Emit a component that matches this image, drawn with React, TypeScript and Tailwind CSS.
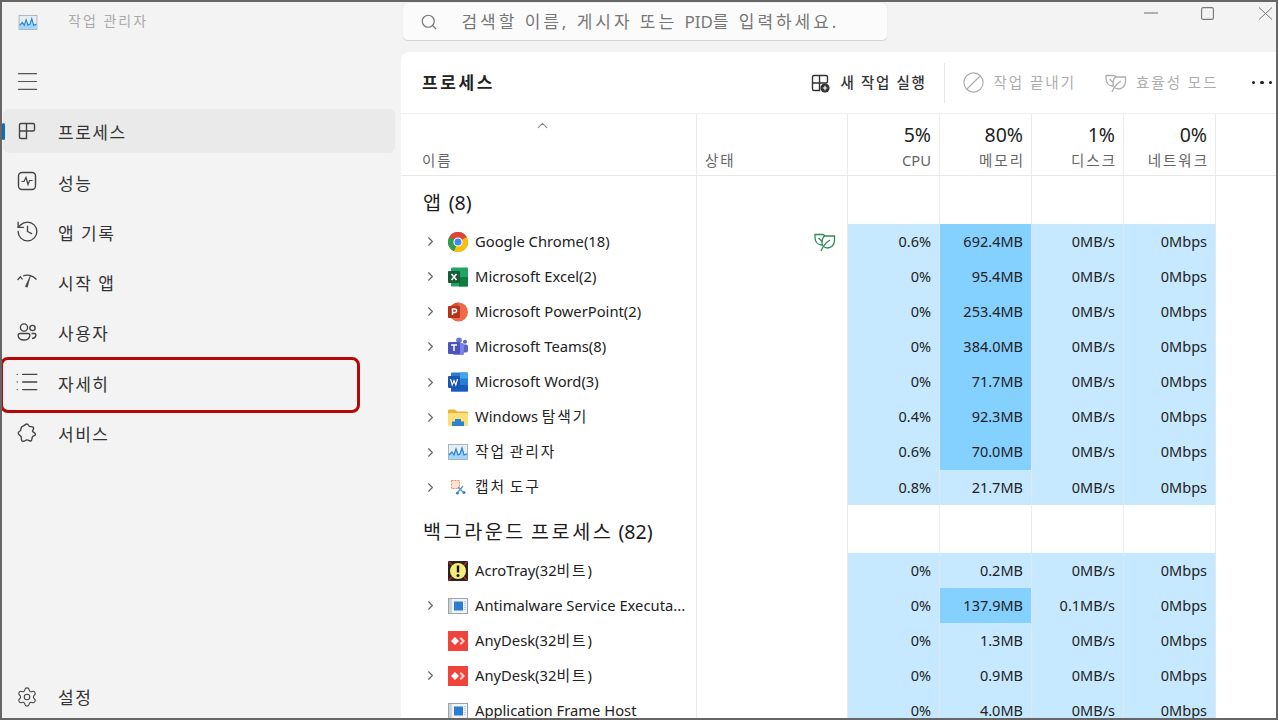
import React from "react"
import { ChevronRight, ChevronUp, History, List, Search, Settings, Ban, Menu } from "lucide-react"

const FONT = "font-['Noto_Sans','Noto_Sans_CJK_KR',sans-serif]"

// hangul runs are wider in the original font, so they get their own tracking
function K({ text }: { text: string }) {
  return (
    <>
      {text.split(/([가-힣]+)/).map((part, i) =>
        i % 2 === 1 ? (
          <span key={i} className="tracking-[0.13em]">{part}</span>
        ) : (
          <span key={i}>{part}</span>
        )
      )}
    </>
  )
}

function TaskIcon({ className = "" }: { className?: string }) {
  return (
    <svg viewBox="0 0 20 16" className={className}>
      <rect x="0.5" y="0.5" width="19" height="15" fill="#e4eef6" stroke="#a9b4bd" />
      <path d="M1 14V10L4 8L6 10L8 4L10 10L12 9L14 3L16 10L19 9V15H1Z" fill="#9fd6fa" />
      <path d="M1 11L4 8L6 11L8 5L10 11L12 10L14 4L16 11L19 10" fill="none" stroke="#2f7fd0" strokeWidth="1.2" />
    </svg>
  )
}

function ProcessIcon({ plus = false }: { plus?: boolean }) {
  return (
    <svg viewBox="0 0 20 20" className="h-5 w-5" fill="none" stroke="currentColor" strokeWidth="1.4">
      <path d="M4 2.5H9.5V10H2.5V4A1.5 1.5 0 0 1 4 2.5ZM9.5 2.5H16A1.5 1.5 0 0 1 17.5 4V8.5A1.5 1.5 0 0 1 16 10H9.5M2.5 10V16A1.5 1.5 0 0 0 4 17.5H9.5V10" />
      {plus && <circle cx="15" cy="15" r="4.6" fill="currentColor" stroke="none" />}
      {plus && <path d="M15 12.8V17.2M12.8 15H17.2" stroke="#fff" strokeWidth="1.2" />}
    </svg>
  )
}

function PerfIcon() {
  return (
    <svg viewBox="0 0 20 20" className="h-5 w-5" fill="none" stroke="currentColor" strokeWidth="1.4">
      <rect x="1.5" y="1.5" width="17" height="17" rx="3.5" />
      <path d="M4.5 10.5H7L9 6.5L11 13.5L12.5 9.5H15.5" strokeWidth="1.2" />
    </svg>
  )
}

function StartupIcon() {
  return (
    <svg viewBox="0 0 20 20" className="h-5 w-5" fill="none" stroke="currentColor" strokeWidth="1.2">
      <path d="M0.5 8L3.5 4.8L5.5 7.5" />
      <path d="M6 4C10 2.2 15.5 3 19.5 7.5" />
      <path d="M8.3 14.5L13.5 3.5L10.3 15.2Z" fill="currentColor" strokeWidth="0.6" />
    </svg>
  )
}

function UsersIcon() {
  return (
    <svg viewBox="0 0 20 20" className="h-5 w-5" fill="none" stroke="currentColor" strokeWidth="1.4">
      <circle cx="7" cy="5.5" r="3.6" />
      <circle cx="15.5" cy="6" r="2.6" />
      <path d="M3 11.5H11C12.5 11.5 13 12.5 12.8 13.8C12.3 16.6 10 18 7 18C4 18 1.6 16.6 1.2 13.8C1 12.5 1.6 11.5 3 11.5Z" />
      <path d="M14.5 11.5H17.5C18.8 11.5 19.2 12.6 18.8 13.8C18.2 15.6 16.8 16.5 15 16.5" />
    </svg>
  )
}

function ServiceIcon() {
  return (
    <svg viewBox="0 0 20 20" className="h-5 w-5" fill="none" stroke="currentColor" strokeWidth="1.4">
      <path d="M10 1C11.5 1 11.5 3.4 13 3.6C14.5 3.8 16.5 3.2 16.6 5.2C16.7 6.8 14.8 7.6 15.6 8.6C16.6 9.6 18.6 9.8 18.4 11.6C18.2 13 16 12.8 15.4 13.8C14.8 15 15.4 17.4 13.6 18C12 18.5 11.2 16.6 9.8 16.9C8.3 17.2 6.2 19.4 4.8 17.6C3.8 16.2 5 14.4 3.8 13.2C2.8 12.2 1 11.4 1.3 9.8C1.6 8.2 3.4 8.4 3.8 6.8C4.2 5.2 3.8 3.6 5.8 3.2C7.2 3 8.4 1 10 1Z" />
    </svg>
  )
}

function LeafIcon({ className = "" }: { className?: string }) {
  return (
    <svg viewBox="0 0 22 20" className={className} fill="none" stroke="currentColor" strokeWidth="1.3">
      <path d="M8 13C4 13 1 10 1 5V2.5H8C9.5 2.5 10.5 3 11 4" />
      <path d="M11 4H20.5V8C20.5 13.5 17 16 13.5 16C10 16 8 13.5 8 10.5C8 7 9.5 4 11 4Z" />
      <path d="M7 19C9 14 12 10.5 16 8M4.5 6L8 9.5" />
    </svg>
  )
}

function ChromeIcon() {
  return (
    <svg viewBox="0 0 20 20" className="h-5 w-5">
      <circle cx="10" cy="10" r="10" fill="#db4437" />
      <path d="M10 10L1.3 5A10 10 0 0 0 6 19.2Z" fill="#2f9e4f" />
      <path d="M10 10L6 19.2A10 10 0 0 0 20 10C20 8 19.5 6.5 18.7 5Z" fill="#f4c20d" />
      <path d="M10 10L1.3 5A10 10 0 0 1 18.7 5H10Z" fill="#db4437" />
      <path d="M10 10L6.5 17L1.3 5Z" fill="#2f9e4f" />
      <circle cx="10" cy="10" r="4.6" fill="#fff" />
      <circle cx="10" cy="10" r="3.5" fill="#4285f4" />
    </svg>
  )
}

function ExcelIcon() {
  return (
    <svg viewBox="0 0 20 20" className="h-5 w-5">
      <rect x="3" y="0.5" width="17" height="19" rx="1" fill="#21a366" />
      <rect x="11" y="10" width="9" height="9.5" fill="#107c41" />
      <rect x="0" y="4" width="12" height="12" rx="1" fill="#185c37" />
      <path d="M3.5 7L8.5 13M8.5 7L3.5 13" stroke="#fff" strokeWidth="1.6" />
    </svg>
  )
}

function PptIcon() {
  return (
    <svg viewBox="0 0 20 20" className="h-5 w-5">
      <circle cx="10.5" cy="10" r="9.5" fill="#ed6c47" />
      <path d="M10.5 0.5A9.5 9.5 0 0 0 1 10H10.5Z" fill="#d35230" />
      <rect x="0" y="4" width="12" height="12" rx="1" fill="#b7311a" />
      <path d="M4.5 13V7H6.8A1.8 1.8 0 0 1 6.8 10.6H4.5" fill="none" stroke="#fff" strokeWidth="1.5" />
    </svg>
  )
}

function TeamsIcon() {
  return (
    <svg viewBox="0 0 20 20" className="h-5 w-5">
      <circle cx="11" cy="3.2" r="2.8" fill="#6a75c9" />
      <circle cx="17" cy="4.8" r="2" fill="#5b66bd" />
      <rect x="13" y="7.5" width="7" height="8" rx="2" fill="#5b66bd" />
      <rect x="5" y="6" width="11" height="12" rx="1.5" fill="#7b83eb" />
      <rect x="0" y="5" width="12" height="12" rx="1" fill="#4b53bc" />
      <path d="M3 8H9M6 8V14" stroke="#fff" strokeWidth="1.5" />
    </svg>
  )
}

function WordIcon() {
  return (
    <svg viewBox="0 0 20 20" className="h-5 w-5">
      <rect x="3" y="0.5" width="17" height="19" rx="1" fill="#2b7cd3" />
      <rect x="3" y="13" width="17" height="6.5" fill="#185abd" />
      <rect x="12" y="0.5" width="8" height="6" fill="#41a5ee" />
      <rect x="0" y="4" width="12" height="12" rx="1" fill="#1a55b0" />
      <path d="M2.5 7L4.2 13L6 8.5L7.8 13L9.5 7" fill="none" stroke="#fff" strokeWidth="1.2" />
    </svg>
  )
}

function FolderIcon() {
  return (
    <svg viewBox="0 0 20 20" className="h-5 w-5">
      <path d="M0 3.5A1 1 0 0 1 1 2.5H7L9 4.5H19A1 1 0 0 1 20 5.5V18H0Z" fill="#e9b43a" />
      <rect x="0" y="6" width="20" height="13" rx="1" fill="#fbdf78" />
      <path d="M4 19V14.5H7V12H13V14.5H16V19Z" fill="#2c80cf" />
    </svg>
  )
}

function SnipIcon() {
  return (
    <svg viewBox="0 0 20 20" className="h-5 w-5">
      <rect x="3.5" y="3.5" width="8" height="8" fill="#fbe3d8" stroke="#ea8c66" strokeDasharray="2 1" />
      <path d="M10 10L15 15M15 9L10 15" stroke="#5a94c4" strokeWidth="1.3" />
      <circle cx="9.5" cy="16" r="1.6" fill="#3b86c9" />
      <circle cx="16" cy="15.5" r="1.6" fill="#3b86c9" />
    </svg>
  )
}

function AcroIcon() {
  return (
    <svg viewBox="0 0 20 20" className="h-5 w-5">
      <rect width="20" height="20" rx="1" fill="#2a2320" />
      <circle cx="10" cy="10" r="8" fill="#f7ec7a" />
      <path d="M10 4.5V11.5" stroke="#111" strokeWidth="2.4" />
      <circle cx="10" cy="14.5" r="1.5" fill="#111" />
      <path d="M1 1L4 4M19 1L16 4M1 19L4 16M19 19L16 16" stroke="#c92a20" strokeWidth="1.4" />
    </svg>
  )
}

function FrameIcon() {
  return (
    <svg viewBox="0 0 20 20" className="h-5 w-5">
      <rect x="0.5" y="2.5" width="19" height="15" fill="#f1f4f7" stroke="#9aa3ab" />
      <rect x="1" y="3" width="3" height="14" fill="#ccd3d9" />
      <rect x="6" y="5.5" width="9" height="9" fill="#2b7cd3" />
      <path d="M17 5V15" stroke="#b7bec4" strokeWidth="1.5" strokeDasharray="1 1" />
    </svg>
  )
}

function AnyDeskIcon() {
  return (
    <svg viewBox="0 0 20 20" className="h-5 w-5">
      <rect width="20" height="20" fill="#ef443b" />
      <path d="M7 6L11 10L7 14L3 10Z" fill="#fff" />
      <path d="M13 6L17 10L13 14L11.5 12.5L14 10L11.5 7.5Z" fill="#fbd4d0" />
    </svg>
  )
}

type Row = { name: string; icon: React.ReactNode; cpu: string; mem: string; disk: string; net: string; exp?: boolean; hot?: boolean; leaf?: boolean }

const apps: Row[] = [
  { name: "Google Chrome(18)", icon: <ChromeIcon />, cpu: "0.6%", mem: "692.4MB", disk: "0MB/s", net: "0Mbps", exp: true, hot: true, leaf: true },
  { name: "Microsoft Excel(2)", icon: <ExcelIcon />, cpu: "0%", mem: "95.4MB", disk: "0MB/s", net: "0Mbps", exp: true, hot: true },
  { name: "Microsoft PowerPoint(2)", icon: <PptIcon />, cpu: "0%", mem: "253.4MB", disk: "0MB/s", net: "0Mbps", exp: true, hot: true },
  { name: "Microsoft Teams(8)", icon: <TeamsIcon />, cpu: "0%", mem: "384.0MB", disk: "0MB/s", net: "0Mbps", exp: true, hot: true },
  { name: "Microsoft Word(3)", icon: <WordIcon />, cpu: "0%", mem: "71.7MB", disk: "0MB/s", net: "0Mbps", exp: true, hot: true },
  { name: "Windows 탐색기", icon: <FolderIcon />, cpu: "0.4%", mem: "92.3MB", disk: "0MB/s", net: "0Mbps", exp: true, hot: true },
  { name: "작업 관리자", icon: <TaskIcon className="h-4 w-5" />, cpu: "0.6%", mem: "70.0MB", disk: "0MB/s", net: "0Mbps", exp: true, hot: true },
  { name: "캡처 도구", icon: <SnipIcon />, cpu: "0.8%", mem: "21.7MB", disk: "0MB/s", net: "0Mbps", exp: true },
]

const background: Row[] = [
  { name: "AcroTray(32비트)", icon: <AcroIcon />, cpu: "0%", mem: "0.2MB", disk: "0MB/s", net: "0Mbps" },
  { name: "Antimalware Service Executa...", icon: <FrameIcon />, cpu: "0%", mem: "137.9MB", disk: "0.1MB/s", net: "0Mbps", exp: true, hot: true },
  { name: "AnyDesk(32비트)", icon: <AnyDeskIcon />, cpu: "0%", mem: "1.3MB", disk: "0MB/s", net: "0Mbps" },
  { name: "AnyDesk(32비트)", icon: <AnyDeskIcon />, cpu: "0%", mem: "0.9MB", disk: "0MB/s", net: "0Mbps", exp: true },
  { name: "Application Frame Host", icon: <FrameIcon />, cpu: "0%", mem: "4.0MB", disk: "0MB/s", net: "0Mbps" },
]

const GRID = "grid grid-cols-[296px_151px_92px_92px_92px_92px_1fr]"

function HeaderCell({ pct, label, hangul = true }: { pct: string; label: string; hangul?: boolean }) {
  return (
    <div className="flex flex-col items-end border-r border-[#ececec] pr-2 pt-[6px]">
      <div className="text-[19.5px] leading-[30px] text-[#222]">{pct}</div>
      <div className={hangul ? "-mr-[2px] text-[14.5px] leading-[20px] tracking-[2px] text-[#666]" : "text-[14.75px] leading-[20px] text-[#666]"}>{label}</div>
    </div>
  )
}

function GroupRow({ title }: { title: string }) {
  return (
    <div className={`${GRID} h-[48px] shrink-0`}>
      <div className="flex items-center whitespace-nowrap border-r border-[#ececec] pl-[22px] pt-[6px] text-[19.6px] text-[#1c1c1c]">
        <span><K text={title} /></span>
      </div>
      <div className="border-r border-[#ececec]" />
      <div className="border-r border-[#ececec]" />
      <div className="border-r border-[#ececec]" />
      <div className="border-r border-[#ececec]" />
      <div className="border-r border-[#ececec]" />
    </div>
  )
}

function ProcessRow({ row }: { row: Row }) {
  const cell = "flex items-center justify-end border-r border-[#dce9f2] bg-[#c6e9ff] pr-2 text-[14.5px] text-[#222]"
  return (
    <div className={`${GRID} h-[35.14px] shrink-0`}>
      <div className="flex items-center whitespace-nowrap border-r border-[#ececec] text-[14.75px] text-[#222]">
        <div className="flex w-[47px] justify-end pr-[10px]">
          {row.exp && <ChevronRight className="h-[15px] w-[15px] text-[#666]" strokeWidth={1.8} />}
        </div>
        <div className="flex w-[27px] items-center">{row.icon}</div>
        <span className="pb-[2px]"><K text={row.name} /></span>
      </div>
      <div className="flex items-center justify-end border-r border-[#ececec] pr-[11px]">
        {row.leaf && <LeafIcon className="h-[20px] w-[22px] text-[#2e8b57]" />}
      </div>
      <div className={cell}>{row.cpu}</div>
      <div className={row.hot ? "flex items-center justify-end border-r border-[#dce9f2] bg-[#84d0ff] pr-2 text-[14.5px] text-[#222]" : cell}>{row.mem}</div>
      <div className={cell}>{row.disk}</div>
      <div className={cell}>{row.net}</div>
    </div>
  )
}

function NavItem({ icon, label, active = false, marked = false }: { icon: React.ReactNode; label: string; active?: boolean; marked?: boolean }) {
  return (
    <div className={active ? "relative mb-[6.3px] ml-[1px] mr-[6px] flex h-[44px] items-center rounded-md bg-[#eaeaea] text-[#333]" : "relative mb-[6.3px] ml-[1px] mr-[6px] flex h-[44px] items-center rounded-md text-[#333]"}>
      {active && <div className="absolute left-[-1px] top-[14px] h-[17px] w-[3px] rounded-full bg-[#0f6cbd]" />}
      <div className="flex w-[55px] justify-center pr-[7px] text-[#444]">{icon}</div>
      <span className="pt-[4px] text-[17px] tracking-[1.5px]">{label}</span>
      {marked && <div className="absolute left-[-3px] top-[-3px] h-[56px] w-[360px] rounded-[8px] border-[3px] border-[#b40808]" />}
    </div>
  )
}

export default function App() {
  return (
    <div className={`${FONT} flex h-[720px] w-[1278px] overflow-hidden border-x-2 border-y-2 border-[#666] bg-[#f3f3f3]`}>
      <aside className="flex w-[399px] shrink-0 flex-col">
        <div className="flex h-[40px] items-center pl-[16px]">
          <TaskIcon className="h-[15px] w-[20px]" />
          <span className="ml-[30px] pb-[4px] text-[14px] tracking-[2px] text-[#aaa]">작업 관리자</span>
        </div>
        <div className="mb-[6px] mt-[17px] flex h-[44px] items-center pl-[11.5px] text-[#555]">
          <Menu className="h-[27px] w-[27px]" strokeWidth={1.1} />
        </div>
        <NavItem icon={<ProcessIcon />} label="프로세스" active />
        <NavItem icon={<PerfIcon />} label="성능" />
        <NavItem icon={<History className="h-[25px] w-[25px]" strokeWidth={1.3} />} label="앱 기록" />
        <NavItem icon={<StartupIcon />} label="시작 앱" />
        <NavItem icon={<UsersIcon />} label="사용자" />
        <NavItem icon={<List className="h-[26px] w-[26px]" strokeWidth={1.3} />} label="자세히" marked />
        <NavItem icon={<ServiceIcon />} label="서비스" />
        <div className="mt-auto flex h-[42px] items-center pl-[1px] text-[#333]">
          <div className="flex w-[55px] justify-center pr-[7px] text-[#444]">
            <Settings className="h-[22px] w-[22px]" strokeWidth={1.2} />
          </div>
          <span className="pt-[2px] text-[17px] tracking-[1.5px]">설정</span>
        </div>
      </aside>

      <main className="flex min-w-0 flex-1 flex-col">
        <div className="flex h-[50px] shrink-0 items-start">
          <div className="ml-[2px] mt-[1px] flex h-[38px] w-[484px] items-center rounded-[5px] border-b border-[#d5d5d5] bg-[#fbfbfb] shadow-[0_0_1px_rgba(0,0,0,0.15)]">
            <Search className="ml-[16.5px] h-[18px] w-[18px] text-[#777]" strokeWidth={1.6} />
            <span className="ml-[24px] whitespace-nowrap text-[17px] text-[#777]">
              <span className="tracking-[2.95px]">검색할 이름, 게시자 또는 </span>PID<span className="tracking-[2.95px]">를 입력하세요.</span>
            </span>
          </div>
          <div className="ml-auto flex h-[22px] items-center pr-[3px] text-[#777]">
            <svg viewBox="0 0 14 14" className="h-[14px] w-[14px]" fill="none" stroke="currentColor" strokeWidth="1.1">
              <path d="M0 7H14" />
            </svg>
            <svg viewBox="0 0 13 13" className="ml-[43px] h-[13px] w-[13px]" fill="none" stroke="currentColor" strokeWidth="1.1">
              <rect x="0.6" y="0.6" width="11.8" height="11.8" rx="1.5" />
            </svg>
            <svg viewBox="0 0 15 13" className="ml-[44px] h-[13px] w-[15px]" fill="none" stroke="currentColor" strokeWidth="1">
              <path d="M1 0.5L14 12.5M14 0.5L1 12.5" />
            </svg>
          </div>
        </div>

        <div className="flex min-h-0 flex-1 flex-col overflow-hidden rounded-tl-[8px] bg-white">
          <div className="flex h-[62px] shrink-0 items-center border-b border-[#f0f0f0]">
            <span className="ml-[21px] text-[17px] font-semibold tracking-[2.6px] text-[#222]">프로세스</span>
            <div className="ml-auto flex items-center text-[#333]">
              <ProcessIcon plus />
              <span className="ml-[10px] text-[14.5px] font-medium tracking-[1.7px]">새 작업 실행</span>
            </div>
            <div className="ml-[17px] h-[40px] w-px bg-[#e8e8e8]" />
            <div className="ml-[17px] flex items-center text-[#adadad]">
              <Ban className="h-[23px] w-[23px] -scale-x-100" strokeWidth={1.2} />
              <span className="ml-[9px] text-[14.5px] tracking-[2px]">작업 끝내기</span>
              <LeafIcon className="ml-[29px] h-[20px] w-[22px]" />
              <span className="ml-[9px] text-[14.5px] tracking-[2px]">효율성 모드</span>
            </div>
            <div className="ml-[33px] mr-[4px] flex gap-[5px]">
              <div className="h-[3.5px] w-[3.5px] rounded-full bg-[#222]" />
              <div className="h-[3.5px] w-[3.5px] rounded-full bg-[#222]" />
              <div className="h-[3.5px] w-[3.5px] rounded-full bg-[#222]" />
            </div>
          </div>

          <div className={`${GRID} h-[62px] shrink-0 border-b border-[#e8e8e8]`}>
            <div className="relative flex items-end border-r border-[#ececec] pb-[3px] pl-[21px] text-[14.5px] tracking-[2px] text-[#666]">
              <ChevronUp className="absolute left-[133px] top-[3px] h-[17px] w-[17px] text-[#888]" strokeWidth={1.6} />
              이름
            </div>
            <div className="flex items-end border-r border-[#ececec] pb-[3px] pl-[8px] text-[14.5px] tracking-[2px] text-[#666]">상태</div>
            <HeaderCell pct="5%" label="CPU" hangul={false} />
            <HeaderCell pct="80%" label="메모리" />
            <HeaderCell pct="1%" label="디스크" />
            <HeaderCell pct="0%" label="네트워크" />
          </div>

          <GroupRow title="앱 (8)" />
          {apps.map((r) => (
            <ProcessRow key={r.name} row={r} />
          ))}
          <GroupRow title="백그라운드 프로세스 (82)" />
          {background.map((r, i) => (
            <ProcessRow key={i} row={r} />
          ))}
        </div>
      </main>
    </div>
  )
}
